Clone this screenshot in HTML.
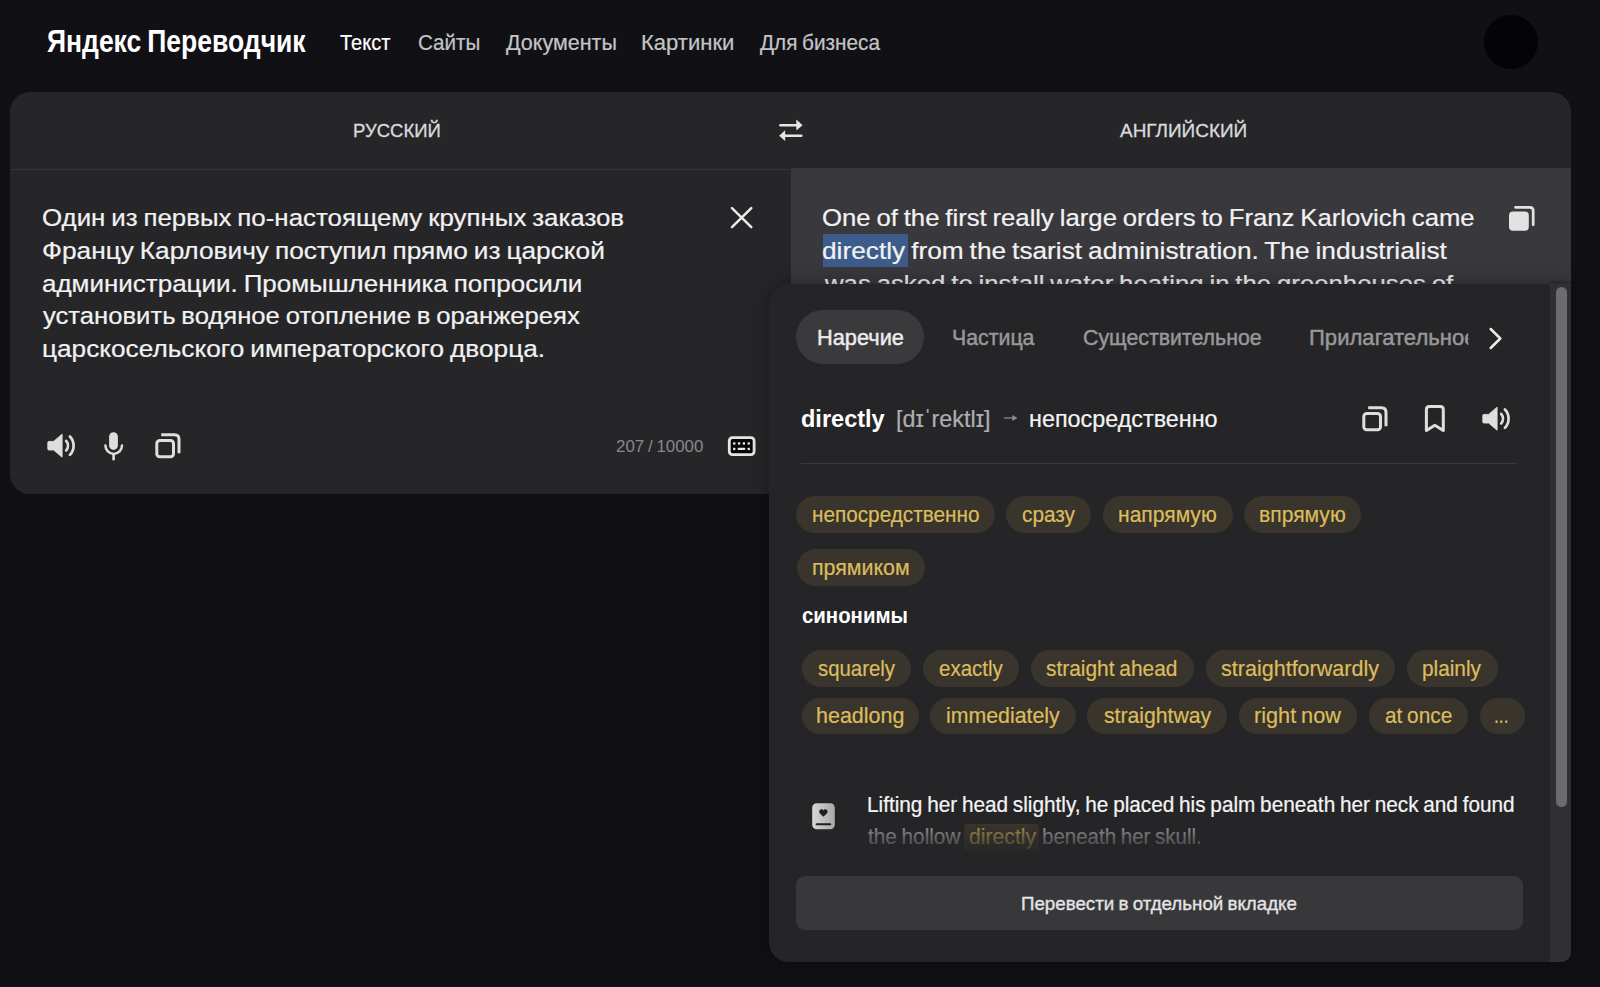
<!DOCTYPE html>
<html lang="ru">
<head>
<meta charset="utf-8">
<title>Яндекс Переводчик</title>
<style>
*{box-sizing:border-box;margin:0;padding:0}
html,body{width:1600px;height:987px;overflow:hidden;background:#111115}
body{position:relative;font-family:"Liberation Sans","DejaVu Sans",sans-serif;color:#fff}
/* all boxes are placed on the page grid (body is the only positioned ancestor) */
.t{position:absolute;white-space:nowrap;line-height:1;transform-origin:0 50%;display:block;font-style:normal;text-decoration:none}
.abs{position:absolute}
button{all:unset}
svg{position:absolute;overflow:visible}
.avatar{left:1484.1px;top:14.5px;width:54px;height:54px;border-radius:50%;background:#040406}
.card{left:10px;top:92px;width:1561px;height:402px;border-radius:20px;background:#262629;overflow:hidden}
.card .sep{left:0;top:77px;width:780px;height:1px;background:#353538}
.card .right{left:780.5px;top:76.4px;width:781px;height:326px;background:#39383d}
.hl{left:823px;top:233.5px;width:85.2px;height:33.5px;background:#3e5c8b}
.popup-bg{left:769px;top:283.5px;width:802px;height:678.5px;border-radius:20px 0 10px 20px;background:#252527;box-shadow:0 0 20px 2px rgba(0,0,0,.28)}
.track{left:1550px;top:281px;width:21px;height:681px;background:#303033;border-radius:0 0 10px 0}
.thumb{left:1555.5px;top:287px;width:11.5px;height:520px;border-radius:6px;background:#6c6c6f}
.pill{left:796px;top:310px;width:128px;height:54px;border-radius:27px;background:#3a3a3d}
.divider{left:801px;top:462.5px;width:716px;height:1.5px;background:#3a3a3d}
.chip{position:absolute;display:block;border-radius:18.5px;background:#39352d}
.btn{left:796px;top:876px;width:727px;height:53.5px;border-radius:9px;background:#38383b}
.exhl{left:964.4px;top:824.4px;width:74.4px;height:27px;border-radius:4px;background:#3b362c}
.fade{left:860px;top:822px;width:660px;height:34px;background:linear-gradient(to bottom,rgba(37,37,39,0) 0%,rgba(37,37,39,.5) 45%,rgba(37,37,39,.92) 100%)}
.clip{clip-path:inset(-5px 8px -5px 0)}
</style>
</head>
<body>

<header class="topbar">
  <span class="t logo" style="left:47.20px;top:26px;font-size:31.5px;color:#ffffff;transform:scaleX(0.8414);font-weight:700;word-spacing:-1.58px;">Яндекс Переводчик</span>
  <nav class="services">
    <a class="t" style="left:340.00px;top:33px;font-size:21.5px;color:#ffffff;transform:scaleX(0.9303);-webkit-text-stroke:.22px #ffffff;">Текст</a>
<a class="t" style="left:417.79px;top:33px;font-size:21.5px;color:#c4c4c6;transform:scaleX(0.9587);-webkit-text-stroke:.22px #c4c4c6;">Сайты</a>
<a class="t" style="left:505.50px;top:33px;font-size:21.5px;color:#c4c4c6;transform:scaleX(1.0011);-webkit-text-stroke:.22px #c4c4c6;">Документы</a>
<a class="t" style="left:641.48px;top:33px;font-size:21.5px;color:#c4c4c6;transform:scaleX(1.0241);-webkit-text-stroke:.22px #c4c4c6;">Картинки</a>
<a class="t" style="left:760.00px;top:33px;font-size:21.5px;color:#c4c4c6;transform:scaleX(0.9646);word-spacing:-1.07px;-webkit-text-stroke:.22px #c4c4c6;">Для бизнеса</a>
  </nav>
  <div class="abs avatar"></div>
</header>

<main class="translator">
  <div class="abs card">
    <div class="abs right"></div>
    <div class="abs sep"></div>
  </div>

  <div class="langbar">
    <span class="t" style="left:352.72px;top:122px;font-size:18px;color:#dadadc;transform:scaleX(1.0274);-webkit-text-stroke:.3px #dadadc;">РУССКИЙ</span>
<span class="t" style="left:1120.00px;top:122px;font-size:18px;color:#dadadc;transform:scaleX(1.0534);-webkit-text-stroke:.3px #dadadc;">АНГЛИЙСКИЙ</span>
    <button class="swap" aria-label="swap"><svg style="left:778px;top:118px" width="26" height="24" viewBox="0 0 26 24">
<path d="M2.5 7.2 L20 7.2" stroke="#e6e6e6" stroke-width="2.6" stroke-linecap="round"/>
<path d="M18.3 1.6 L24.6 7.2 L18.3 12.4 Z" fill="#e6e6e6"/>
<path d="M6 17.7 L23.3 17.7" stroke="#e6e6e6" stroke-width="2.6" stroke-linecap="round"/>
<path d="M7.2 12.2 L1.1 17.7 L7.2 23 Z" fill="#e6e6e6"/>
</svg></button>
  </div>

  <section class="pane source">
    <div class="textarea">
      <span class="t" style="left:41.94px;top:206px;font-size:24.5px;color:#f2f2f2;transform:scaleX(1.0556);word-spacing:-1.23px;-webkit-text-stroke:.22px #f2f2f2;">Один из первых по-настоящему крупных заказов</span>
<span class="t" style="left:41.93px;top:239px;font-size:24.5px;color:#f2f2f2;transform:scaleX(1.0712);word-spacing:-1.23px;-webkit-text-stroke:.22px #f2f2f2;">Францу Карловичу поступил прямо из царской</span>
<span class="t" style="left:41.94px;top:272px;font-size:24.5px;color:#f2f2f2;transform:scaleX(1.0603);word-spacing:-1.23px;-webkit-text-stroke:.22px #f2f2f2;">администрации. Промышленника попросили</span>
<span class="t" style="left:43.00px;top:304px;font-size:24.5px;color:#f2f2f2;transform:scaleX(1.0463);word-spacing:-1.23px;-webkit-text-stroke:.22px #f2f2f2;">установить водяное отопление в оранжереях</span>
<span class="t" style="left:41.93px;top:337px;font-size:24.5px;color:#f2f2f2;transform:scaleX(1.0695);word-spacing:-1.23px;-webkit-text-stroke:.22px #f2f2f2;">царскосельского императорского дворца.</span>
    </div>
    <button class="clear" aria-label="clear"><svg style="left:730px;top:206px" width="24" height="24" viewBox="0 0 24 24">
<path d="M2 2.2 L21.3 21.2 M21.3 2.2 L2 21.2" stroke="#ececec" stroke-width="2.5" stroke-linecap="round"/>
</svg></button>
    <div class="tools">
      <button aria-label="listen"><svg style="left:46.5px;top:433.3px" width="30" height="27" viewBox="0 0 30 27">
<path d="M15.1 1.2 L15.1 24.2 L6.6 17 L1.9 17 Q0.8 17 0.8 15.9 L0.8 9.5 Q0.8 8.4 1.9 8.4 L6.6 8.4 Z" fill="#dedede" stroke="#dedede" stroke-width="0.9" stroke-linejoin="round"/>
<path d="M19.2 7.9 A7.6 7.6 0 0 1 19.2 17.5" fill="none" stroke="#dedede" stroke-width="2.7" stroke-linecap="round"/>
<path d="M22.9 3.5 A13.3 13.3 0 0 1 22.9 21.9" fill="none" stroke="#dedede" stroke-width="2.7" stroke-linecap="round"/>
</svg></button>
      <button aria-label="voice"><svg style="left:104px;top:432px" width="20" height="28" viewBox="0 0 20 28">
<rect x="5.1" y="0.2" width="8.8" height="17.7" rx="4.4" fill="#dedede"/>
<path d="M1.4 13.6 A8.3 8.3 0 0 0 18 13.6" fill="none" stroke="#dedede" stroke-width="2.5" stroke-linecap="round"/>
<path d="M9.6 22.3 L9.6 27.3" stroke="#dedede" stroke-width="2.6" stroke-linecap="round"/>
</svg></button>
      <button aria-label="copy"><svg style="left:155px;top:433px" width="26" height="26" viewBox="0 0 26 26">
<rect x="1.8" y="7.4" width="16.7" height="16.4" rx="3" fill="none" stroke="#dedede" stroke-width="3"/>
<path d="M6.2 1.8 L19.5 1.8 Q24 1.8 24 6.3 L24 20.2" fill="none" stroke="#dedede" stroke-width="3"/>
</svg></button>
      <span class="t" style="left:615.90px;top:438px;font-size:16.5px;color:#88888b;transform:scaleX(1.0218);word-spacing:-0.83px;">207 / 10000</span>
      <button aria-label="keyboard"><svg style="left:727px;top:435px" width="30" height="22" viewBox="0 0 30 22">
<rect x="2.3" y="2.6" width="24.8" height="17.1" rx="3.2" fill="#050505" stroke="#e6e6e6" stroke-width="2.8"/>
<rect x="6.10" y="7.3" width="2.3" height="2.3" fill="#e6e6e6"/>
<rect x="10.90" y="7.3" width="2.3" height="2.3" fill="#e6e6e6"/>
<rect x="15.75" y="7.3" width="2.3" height="2.3" fill="#e6e6e6"/>
<rect x="20.60" y="7.3" width="2.3" height="2.3" fill="#e6e6e6"/>
<rect x="6.10" y="12.8" width="2.3" height="2.3" fill="#e6e6e6"/>
<rect x="20.60" y="12.8" width="2.3" height="2.3" fill="#e6e6e6"/>
<rect x="10.6" y="12.8" width="7.8" height="2.3" rx="1" fill="#e6e6e6"/>
</svg></button>
    </div>
  </section>

  <section class="pane target">
    <div class="abs hl"></div>
    <div class="textarea">
      <span class="t" style="left:822.45px;top:206px;font-size:24.5px;color:#f2f2f2;transform:scaleX(1.0489);word-spacing:-1.23px;-webkit-text-stroke:.22px #f2f2f2;">One of the first really large orders to Franz Karlovich came</span>
<span class="t" style="left:822.43px;top:239px;font-size:24.5px;color:#f2f2f2;transform:scaleX(1.0716);word-spacing:-1.23px;-webkit-text-stroke:.22px #f2f2f2;">directly from the tsarist administration. The industrialist</span>
<span class="t" style="left:824.55px;top:272px;font-size:24.5px;color:#f2f2f2;transform:scaleX(1.0510);word-spacing:-1.23px;-webkit-text-stroke:.22px #f2f2f2;">was asked to install water heating in the greenhouses of</span>
    </div>
    <button aria-label="copy"><svg style="left:1509.3px;top:205.5px" width="26" height="25" viewBox="0 0 26 25">
<rect x="0" y="5.5" width="19.8" height="19.3" rx="4" fill="#e2e2e2"/>
<path d="M6.5 1.3 L20.8 1.3 Q24.2 1.3 24.2 4.7 L24.2 18.8" fill="none" stroke="#e2e2e2" stroke-width="2.7" stroke-linecap="round"/>
</svg></button>
  </section>

  <aside class="dictionary">
    <div class="abs track"></div>
    <div class="abs popup-bg"></div>
    <div class="abs track" style="top:283.5px;height:678.5px"></div>
    <div class="abs thumb"></div>

    <div class="tabs">
      <div class="abs pill"></div>
      <span class="t" style="left:816.99px;top:328px;font-size:21.5px;color:#ececec;transform:scaleX(1.0132);-webkit-text-stroke:.45px #ececec;">Наречие</span>
<span class="t" style="left:951.51px;top:328px;font-size:21.5px;color:#98989b;transform:scaleX(0.9914);-webkit-text-stroke:.45px #98989b;">Частица</span>
<span class="t" style="left:1082.76px;top:328px;font-size:21.5px;color:#98989b;transform:scaleX(0.9922);-webkit-text-stroke:.45px #98989b;">Существительное</span>
<span class="t clip" style="left:1308.97px;top:328px;font-size:21.5px;color:#98989b;transform:scaleX(1.0267);-webkit-text-stroke:.45px #98989b;">Прилагательное</span>
      <button aria-label="next"><svg style="left:1488px;top:326px" width="16" height="25" viewBox="0 0 16 25">
<path d="M2.7 3 L12.3 12.5 L2.7 22" fill="none" stroke="#ececec" stroke-width="2.5" stroke-linecap="round" stroke-linejoin="round"/>
</svg></button>
    </div>

    <div class="entry">
      <span class="t" style="left:800.94px;top:407px;font-size:24.5px;color:#ffffff;transform:scaleX(0.9604);font-weight:700;">directly</span>
<span class="t" style="left:896.45px;top:407px;font-size:24.5px;color:#aeaeb1;transform:scaleX(0.9536);-webkit-text-stroke:.22px #aeaeb1;">[dɪˈrektlɪ]</span>
<span class="t" style="left:1029.05px;top:407px;font-size:24.5px;color:#f4f4f4;transform:scaleX(0.9531);-webkit-text-stroke:.22px #f4f4f4;">непосредственно</span>
      <svg style="left:1003px;top:413px" width="16" height="10" viewBox="0 0 16 10">
<path d="M0.9 5 L10 5" stroke="#8c8c8f" stroke-width="1.3"/>
<path d="M9.3 2.1 L14.6 5 L9.3 7.9 Z" fill="#8c8c8f"/>
</svg>
      <button aria-label="copy"><svg style="left:1362.3px;top:406.1px" width="26" height="26" viewBox="0 0 26 26">
<rect x="1.8" y="7.4" width="16.7" height="16.4" rx="3" fill="none" stroke="#dedede" stroke-width="3"/>
<path d="M6.2 1.8 L19.5 1.8 Q24 1.8 24 6.3 L24 20.2" fill="none" stroke="#dedede" stroke-width="3"/>
</svg></button>
      <button aria-label="favourite"><svg style="left:1424px;top:404px" width="22" height="29" viewBox="0 0 22 29">
<path d="M2.4 26.5 L2.4 5.6 Q2.4 2.6 5.4 2.6 L16.3 2.6 Q19.3 2.6 19.3 5.6 L19.3 26.5 L10.85 21.2 Z" fill="none" stroke="#dedede" stroke-width="3" stroke-linejoin="round"/>
</svg></button>
      <button aria-label="listen"><svg style="left:1481.8px;top:405.9px" width="30" height="27" viewBox="0 0 30 27">
<path d="M15.1 1.2 L15.1 24.2 L6.6 17 L1.9 17 Q0.8 17 0.8 15.9 L0.8 9.5 Q0.8 8.4 1.9 8.4 L6.6 8.4 Z" fill="#dedede" stroke="#dedede" stroke-width="0.9" stroke-linejoin="round"/>
<path d="M19.2 7.9 A7.6 7.6 0 0 1 19.2 17.5" fill="none" stroke="#dedede" stroke-width="2.7" stroke-linecap="round"/>
<path d="M22.9 3.5 A13.3 13.3 0 0 1 22.9 21.9" fill="none" stroke="#dedede" stroke-width="2.7" stroke-linecap="round"/>
</svg></button>
      <div class="abs divider"></div>
    </div>

    <div class="translations">
      <i class="chip" style="left:796.25px;top:496.00px;width:198.75px;height:36.8px"></i>
<i class="chip" style="left:1006.25px;top:496.00px;width:85.00px;height:36.8px"></i>
<i class="chip" style="left:1102.50px;top:496.00px;width:130.50px;height:36.8px"></i>
<i class="chip" style="left:1244.00px;top:496.00px;width:117.00px;height:36.8px"></i>
<i class="chip" style="left:796.50px;top:549.20px;width:128.70px;height:36.4px"></i>
      <span class="t" style="left:811.56px;top:504px;font-size:22px;color:#dcbc5c;transform:scaleX(0.9424);-webkit-text-stroke:.22px #dcbc5c;">непосредственно</span>
<span class="t" style="left:1022.00px;top:504px;font-size:22px;color:#dcbc5c;transform:scaleX(0.9454);-webkit-text-stroke:.22px #dcbc5c;">сразу</span>
<span class="t" style="left:1117.79px;top:504px;font-size:22px;color:#dcbc5c;transform:scaleX(0.9575);-webkit-text-stroke:.22px #dcbc5c;">напрямую</span>
<span class="t" style="left:1258.74px;top:504px;font-size:22px;color:#dcbc5c;transform:scaleX(0.9598);-webkit-text-stroke:.22px #dcbc5c;">впрямую</span>
<span class="t" style="left:811.53px;top:557px;font-size:22px;color:#dcbc5c;transform:scaleX(0.9722);-webkit-text-stroke:.22px #dcbc5c;">прямиком</span>
    </div>

    <div class="synonyms">
      <span class="t" style="left:801.80px;top:605px;font-size:22px;color:#ffffff;transform:scaleX(0.9263);font-weight:700;">синонимы</span>
      <i class="chip" style="left:802.00px;top:649.80px;width:108.80px;height:36.8px"></i>
<i class="chip" style="left:922.50px;top:649.80px;width:96.25px;height:36.8px"></i>
<i class="chip" style="left:1030.75px;top:649.80px;width:162.85px;height:36.8px"></i>
<i class="chip" style="left:1205.50px;top:649.80px;width:189.20px;height:36.8px"></i>
<i class="chip" style="left:1406.50px;top:649.80px;width:91.00px;height:36.8px"></i>
<i class="chip" style="left:801.60px;top:697.80px;width:117.80px;height:36.3px"></i>
<i class="chip" style="left:930.00px;top:697.80px;width:146.00px;height:36.3px"></i>
<i class="chip" style="left:1087.00px;top:697.80px;width:140.00px;height:36.3px"></i>
<i class="chip" style="left:1238.50px;top:697.80px;width:118.50px;height:36.3px"></i>
<i class="chip" style="left:1368.50px;top:697.80px;width:99.20px;height:36.3px"></i>
<i class="chip" style="left:1479.50px;top:697.80px;width:45.50px;height:36.3px"></i>
      <span class="t" style="left:817.50px;top:658px;font-size:22px;color:#dcbc5c;transform:scaleX(0.9260);-webkit-text-stroke:.22px #dcbc5c;">squarely</span>
<span class="t" style="left:938.75px;top:658px;font-size:22px;color:#dcbc5c;transform:scaleX(0.9311);-webkit-text-stroke:.22px #dcbc5c;">exactly</span>
<span class="t" style="left:1046.25px;top:658px;font-size:22px;color:#dcbc5c;transform:scaleX(0.9500);word-spacing:-1.10px;-webkit-text-stroke:.22px #dcbc5c;">straight ahead</span>
<span class="t" style="left:1221.00px;top:658px;font-size:22px;color:#dcbc5c;transform:scaleX(0.9790);-webkit-text-stroke:.22px #dcbc5c;">straightforwardly</span>
<span class="t" style="left:1422.05px;top:658px;font-size:22px;color:#dcbc5c;transform:scaleX(0.9451);-webkit-text-stroke:.22px #dcbc5c;">plainly</span>
<span class="t" style="left:816.42px;top:705px;font-size:22px;color:#dcbc5c;transform:scaleX(0.9762);-webkit-text-stroke:.22px #dcbc5c;">headlong</span>
<span class="t" style="left:945.83px;top:705px;font-size:22px;color:#dcbc5c;transform:scaleX(0.9685);-webkit-text-stroke:.22px #dcbc5c;">immediately</span>
<span class="t" style="left:1103.50px;top:705px;font-size:22px;color:#dcbc5c;transform:scaleX(0.9634);-webkit-text-stroke:.22px #dcbc5c;">straightway</span>
<span class="t" style="left:1254.01px;top:705px;font-size:22px;color:#dcbc5c;transform:scaleX(0.9853);word-spacing:-1.10px;-webkit-text-stroke:.22px #dcbc5c;">right now</span>
<span class="t" style="left:1384.50px;top:705px;font-size:22px;color:#dcbc5c;transform:scaleX(0.9459);word-spacing:-1.10px;-webkit-text-stroke:.22px #dcbc5c;">at once</span>
<span class="t" style="left:1494.42px;top:705px;font-size:22px;color:#dcbc5c;transform:scaleX(0.7882);-webkit-text-stroke:.22px #dcbc5c;">...</span>
    </div>

    <div class="example">
      <svg style="left:812px;top:802.8px" width="23" height="27" viewBox="0 0 23 27">
<defs><linearGradient id="bk" x1="0" y1="0" x2="1" y2="0"><stop offset="0" stop-color="#d6d6d6"/><stop offset="1" stop-color="#a9a9a9"/></linearGradient></defs>
<rect x="0.2" y="0.2" width="22.6" height="26" rx="4.5" fill="url(#bk)"/>
<path d="M11.4 13.3 C9.4 11.8 7.5 10.4 7.5 8.6 C7.5 6.3 10.3 5.8 11.4 7.6 C12.5 5.8 15.3 6.3 15.3 8.6 C15.3 10.4 13.4 11.8 11.4 13.3 Z" fill="#1f1f21" stroke="#1f1f21" stroke-width="0.6"/>
<path d="M4.6 21.2 L18.2 21.2" stroke="#1f1f21" stroke-width="2.1" stroke-linecap="round"/>
</svg>
      <div class="abs exhl"></div>
      <span class="t" style="left:866.56px;top:794px;font-size:22px;color:#f4f4f4;transform:scaleX(0.9441);word-spacing:-1.10px;-webkit-text-stroke:.22px #f4f4f4;">Lifting her head slightly, he placed his palm beneath her neck and found</span>
<span class="t" style="left:867.50px;top:826px;font-size:22px;color:#a6a6a8;transform:scaleX(0.9431);word-spacing:-1.10px;-webkit-text-stroke:.22px #a6a6a8;">the hollow</span>
<span class="t" style="left:968.50px;top:826px;font-size:22px;color:#b89e54;transform:scaleX(0.9629);-webkit-text-stroke:.22px #b89e54;">directly</span>
<span class="t" style="left:1042.07px;top:826px;font-size:22px;color:#a6a6a8;transform:scaleX(0.9318);word-spacing:-1.10px;-webkit-text-stroke:.22px #a6a6a8;">beneath her skull.</span>
      <div class="abs fade"></div>
    </div>

    <div class="abs btn"></div>
    <button class="t" style="left:1021.01px;top:894px;font-size:19px;color:#e4e4e4;transform:scaleX(0.9853);word-spacing:-0.95px;-webkit-text-stroke:.35px #e4e4e4;">Перевести в отдельной вкладке</button>
  </aside>
</main>

</body>
</html>
